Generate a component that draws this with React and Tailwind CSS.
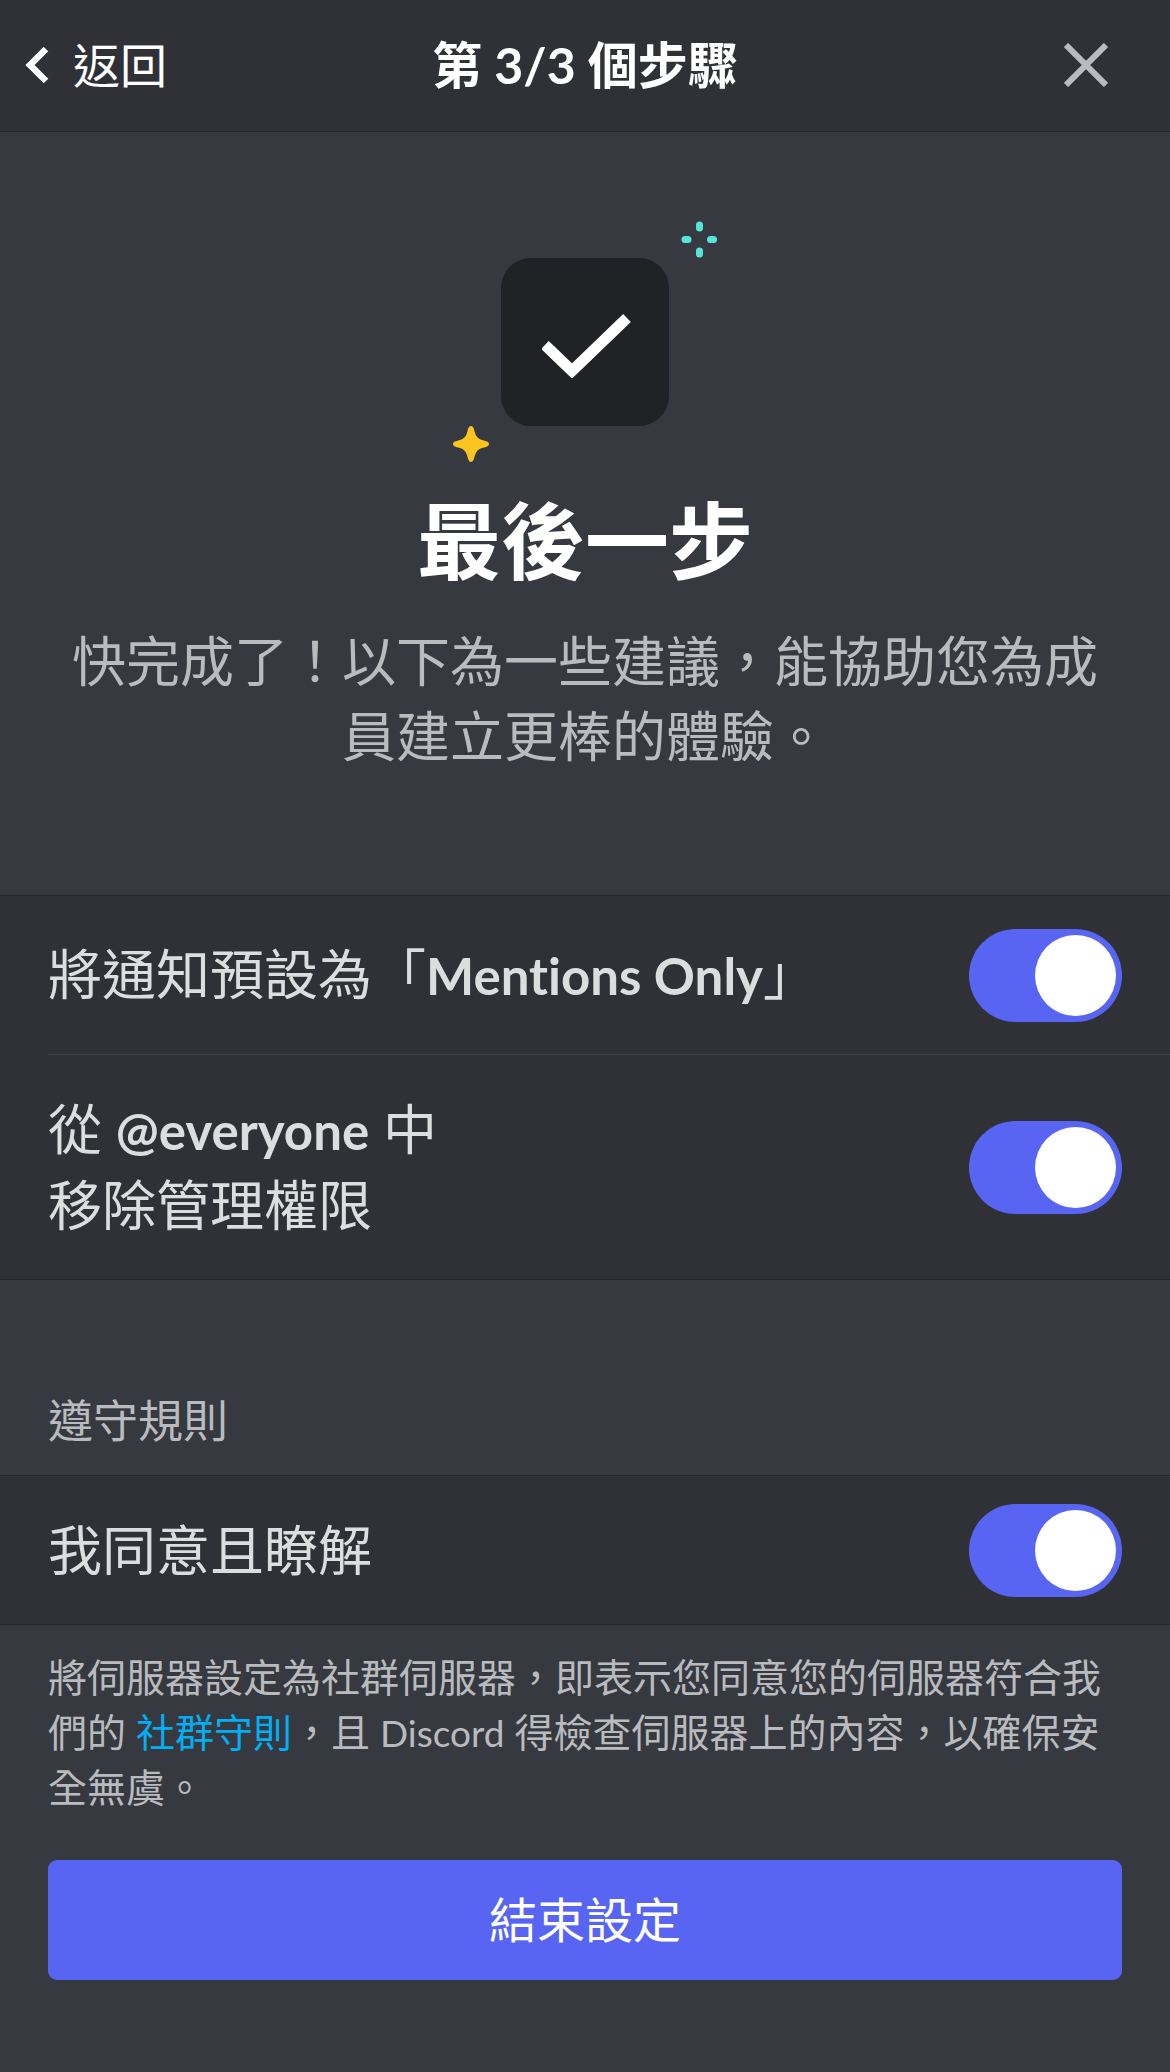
const Toggle = () => (
  <div className="flex h-[93px] w-[153px] shrink-0 items-center justify-end rounded-full bg-[#5865f2] pr-[6px]">
    <div className="h-[81px] w-[81px] rounded-full bg-white" />
  </div>
);

export default function App() {
  return (
    <div className="flex h-[2072px] w-[1170px] flex-col overflow-hidden bg-[#36393f] text-[#dcddde] font-['Lato','Noto_Sans_CJK_TC',sans-serif] [font-variant-ligatures:none]">
      <header className="flex h-[132px] items-center justify-between border-b border-[#26282c] bg-[#2f3136] pb-[2px] text-white">
        <div className="flex w-[300px] items-center pl-[24px]">
          <svg width="26" height="38" viewBox="0 0 26 38" fill="none" stroke="#fff" strokeWidth="6.5">
            <path d="M22 3 L6 19 L22 35" />
          </svg>
          <span className="ml-[23px] text-[47px] leading-[60px]">返回</span>
        </div>
        <h1 className="text-[50px] font-bold leading-[60px]">第 3/3 個步驟</h1>
        <div className="flex w-[300px] justify-end pr-[62px]">
          <svg width="44" height="44" viewBox="0 0 44 44" stroke="#b9bbbe" strokeWidth="6">
            <path d="M2 2 L42 42 M42 2 L2 42" />
          </svg>
        </div>
      </header>

      <section className="flex h-[763px] flex-col items-center pt-[126px]">
        <div className="relative h-[168px] w-[168px] rounded-[30px] bg-[#202225]">
          <svg className="absolute left-[41px] top-[50px]" width="90" height="70" viewBox="0 0 90 70" fill="none" stroke="#fff" strokeWidth="11">
            <path d="M3 37 L30 63 L85 10" />
          </svg>
          <svg className="absolute left-[180px] top-[-37px]" width="38" height="38" viewBox="0 0 38 38" fill="#55e6da">
            <rect x="15" y="0.5" width="7" height="10" rx="3.5" />
            <rect x="15" y="26.5" width="7" height="10" rx="3.5" />
            <rect x="0.5" y="15" width="10" height="7" rx="3.5" />
            <rect x="26" y="15" width="10" height="7" rx="3.5" />
          </svg>
          <svg className="absolute left-[-48px] top-[168px]" width="36" height="36" viewBox="0 0 38 38" fill="#fbc41f">
            <path d="M19 0 C21.500 0 22 3 23 6.500 C24 11 27 14 31.500 15 C35 16 38 16.500 38 19 C38 21.500 35 22 31.500 23 C27 24 24 27 23 31.500 C22 35 21.500 38 19 38 C16.500 38 16 35 15 31.500 C14 27 11 24 6.500 23 C3 22 0 21.500 0 19 C0 16.500 3 16 6.500 15 C11 14 14 11 15 6.500 C16 3 16.500 0 19 0 Z" />
          </svg>
        </div>
        <h2 className="mt-[62px] text-[84px] font-bold leading-[106px] text-white">最後一步</h2>
        <p className="mt-[30px] w-[1040px] text-center text-[54px] leading-[75px] text-[#b9bbbe]">
          快完成了！以下為一些建議，能協助您為成員建立更棒的體驗。
        </p>
      </section>

      <section className="border-y border-[#26282c] bg-[#2f3136] pl-[48px]">
        <div className="flex h-[159px] items-center justify-between border-b border-[#3c3e44] pr-[48px]">
          <div className="text-[54px] leading-[75px]">
            將通知預設為「<span className="text-[51px] font-bold">Mentions Only</span>」
          </div>
          <Toggle />
        </div>
        <div className="flex h-[224px] items-center justify-between pr-[48px]">
          <div className="text-[54px] leading-[75px]">
            從 <span className="text-[51px] font-bold">@everyone</span> 中<br />移除管理權限
          </div>
          <Toggle />
        </div>
      </section>

      <div className="px-[48px] pb-[24px] pt-[111px] text-[45px] leading-[60px] text-[#b9bbbe]">遵守規則</div>

      <section className="flex h-[150px] items-center justify-between border-y border-[#26282c] bg-[#2f3136] px-[48px]">
        <div className="text-[54px] leading-[75px]">我同意且瞭解</div>
        <Toggle />
      </section>

      <p className="px-[48px] pt-[25px] text-[39px] leading-[55px] text-[#b9bbbe]">
        將伺服器設定為社群伺服器，即表示您同意您的伺服器符合我們的 <span className="text-[#00aff4]">社群守則</span>，且 <span className="text-[37px]">Discord</span> 得檢查伺服器上的內容，以確保安全無虞。
      </p>

      <div className="px-[48px] pt-[45px]">
        <button className="flex h-[120px] w-full items-center justify-center rounded-[9px] bg-[#5865f2] text-[48px] text-white">
          結束設定
        </button>
      </div>
    </div>
  );
}
